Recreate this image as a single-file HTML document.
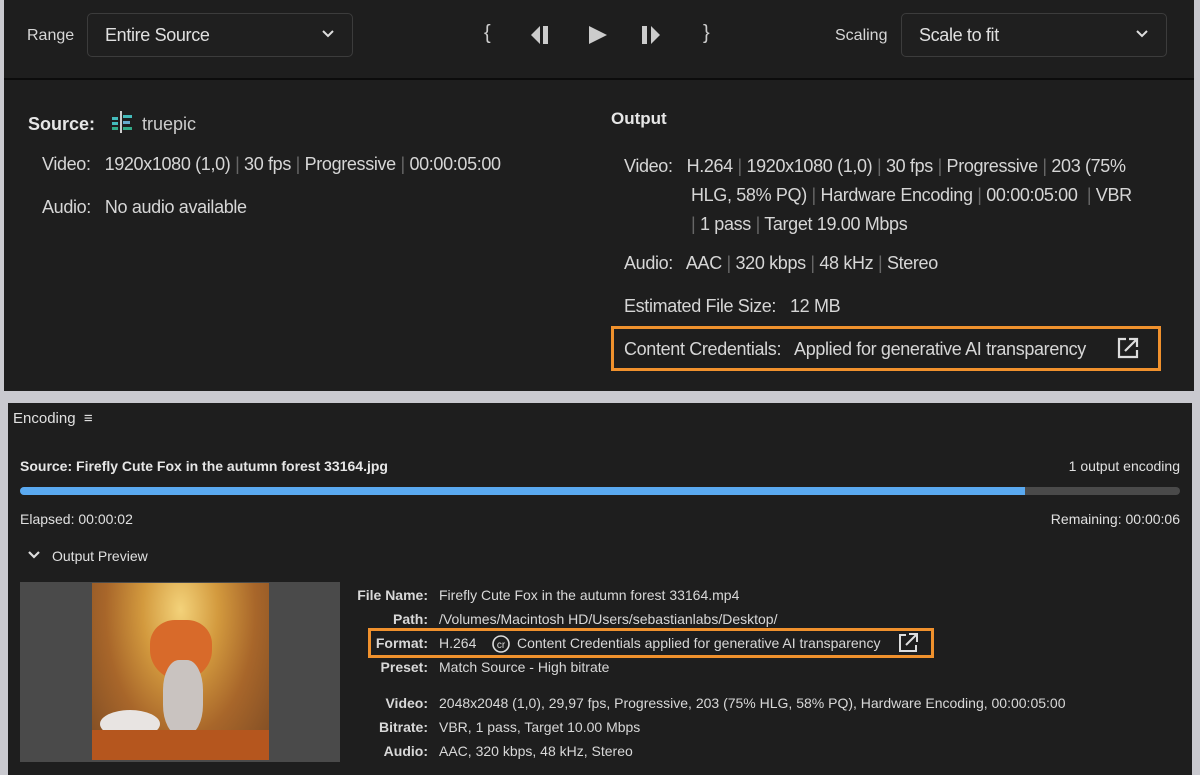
<!DOCTYPE html>
<html><head><meta charset="utf-8"><style>
*{margin:0;padding:0;box-sizing:border-box}
body{width:1200px;height:775px;background:#c9c9cf;position:relative;overflow:hidden;font-family:"Liberation Sans",sans-serif;color:#d6d6d6}
.p{position:absolute;background:#1e1e1e}
.t{position:absolute;white-space:nowrap}
.ls{letter-spacing:-0.35px}
.dd{position:absolute;border:1px solid #3c3c3c;border-radius:5px;background:#1f1f1f;height:44px}
.sep{color:#666}
.lbl{position:absolute;text-align:right;width:90px;white-space:nowrap;font-weight:bold;font-size:14px;color:#d8d8d8}
.val{position:absolute;white-space:nowrap;font-size:14px;color:#d8d8d8}
.or{position:absolute;border:3px solid #f0912d}
</style></head><body>
<div class="p" style="left:4px;top:0;width:1190px;height:391px"></div>
<div style="position:absolute;left:4px;top:78px;width:1190px;height:2px;background:#0c0c0c"></div>
<div class="p" style="left:8px;top:403px;width:1184px;height:372px"></div>

<div class="t" style="left:27px;top:27px;font-size:16px">Range</div>
<div class="dd" style="left:87px;top:13px;width:266px"></div>
<div class="t ls" style="left:105px;top:25px;font-size:18px;color:#e0e0e0">Entire Source</div>
<svg style="position:absolute;left:321px;top:29px" width="14" height="10"><path d="M2 2l5 5 5-5" stroke="#ddd" stroke-width="2" fill="none"/></svg>

<div class="t" style="left:484px;top:22px;font-size:20px;color:#ccc">{</div>
<svg style="position:absolute;left:529px;top:24px" width="26" height="22"><path d="M11 2L2 11l9 9z" fill="#ccc"/><rect x="14" y="2" width="5" height="18" fill="#ccc"/></svg>
<svg style="position:absolute;left:587px;top:24px" width="22" height="22"><path d="M2 2l18 9-18 9z" fill="#ccc"/></svg>
<svg style="position:absolute;left:640px;top:24px" width="26" height="22"><rect x="2" y="2" width="5" height="18" fill="#ccc"/><path d="M11 2l9 9-9 9z" fill="#ccc"/></svg>
<div class="t" style="left:703px;top:22px;font-size:20px;color:#ccc">}</div>

<div class="t" style="left:835px;top:27px;font-size:16px">Scaling</div>
<div class="dd" style="left:901px;top:13px;width:266px"></div>
<div class="t ls" style="left:919px;top:25px;font-size:18px;color:#e0e0e0">Scale to fit</div>
<svg style="position:absolute;left:1135px;top:29px" width="14" height="10"><path d="M2 2l5 5 5-5" stroke="#ddd" stroke-width="2" fill="none"/></svg>

<div class="t" style="left:28px;top:114px;font-size:18px;font-weight:bold;color:#e6e6e6">Source:</div>
<svg style="position:absolute;left:110px;top:110px" width="24" height="24"><rect x="2" y="7" width="6" height="3" fill="#4bb"/><rect x="2" y="12" width="6" height="3" fill="#4bb"/><rect x="2" y="17" width="6" height="3" fill="#3a8"/><rect x="10" y="1" width="2" height="22" fill="#ccc"/><rect x="13" y="5" width="9" height="3" fill="#4bb"/><rect x="13" y="11" width="7" height="3" fill="#6ac"/><rect x="13" y="17" width="9" height="3" fill="#3a8"/></svg>
<div class="t" style="left:142px;top:114px;font-size:18px;color:#ccc">truepic</div>
<div class="t ls" style="left:42px;top:154px;font-size:18px">Video:&nbsp;&nbsp; 1920x1080 (1,0) <span class="sep">|</span> 30 fps <span class="sep">|</span> Progressive <span class="sep">|</span> 00:00:05:00</div>
<div class="t ls" style="left:42px;top:197px;font-size:18px">Audio:&nbsp;&nbsp; No audio available</div>

<div class="t" style="left:611px;top:109px;font-size:17px;font-weight:bold;color:#e6e6e6">Output</div>
<div class="t ls" style="left:624px;top:152px;font-size:18px;line-height:29px">Video:&nbsp;&nbsp; H.264 <span class="sep">|</span> 1920x1080 (1,0) <span class="sep">|</span> 30 fps <span class="sep">|</span> Progressive <span class="sep">|</span> 203 (75%</div>
<div class="t ls" style="left:691px;top:181px;font-size:18px;line-height:29px">HLG, 58% PQ) <span class="sep">|</span> Hardware Encoding <span class="sep">|</span> 00:00:05:00 &nbsp;<span class="sep">|</span> VBR</div>
<div class="t ls" style="left:691px;top:210px;font-size:18px;line-height:29px"><span class="sep">|</span> 1 pass <span class="sep">|</span> Target 19.00 Mbps</div>
<div class="t ls" style="left:624px;top:253px;font-size:18px">Audio:&nbsp;&nbsp; AAC <span class="sep">|</span> 320 kbps <span class="sep">|</span> 48 kHz <span class="sep">|</span> Stereo</div>
<div class="t ls" style="left:624px;top:296px;font-size:18px">Estimated File Size:&nbsp;&nbsp; 12 MB</div>
<div class="or" style="left:611px;top:326px;width:550px;height:45px"></div>
<div class="t ls" style="left:624px;top:339px;font-size:18px">Content Credentials:&nbsp;&nbsp; Applied for generative AI transparency</div>
<svg style="position:absolute;left:1116px;top:336px" width="24" height="24"><path d="M10 3H3v18h18v-7" stroke="#ddd" stroke-width="2.2" fill="none"/><path d="M9 15L20 4M13 3h8v8" stroke="#ddd" stroke-width="2.2" fill="none"/></svg>

<div class="t" style="left:13px;top:410px;font-size:15px;color:#e0e0e0">Encoding &nbsp;≡</div>
<div class="t" style="left:20px;top:458px;font-size:14px;font-weight:bold;color:#e6e6e6">Source: Firefly Cute Fox in the autumn forest 33164.jpg</div>
<div class="t" style="right:20px;top:458px;font-size:14px;color:#e0e0e0">1 output encoding</div>
<div style="position:absolute;left:20px;top:487px;width:1160px;height:8px;border-radius:4px;background:#4a4a4a"></div>
<div style="position:absolute;left:20px;top:487px;width:1005px;height:8px;border-radius:4px 0 0 4px;background:#5aa9f0"></div>
<div class="t" style="left:20px;top:511px;font-size:14px;color:#e0e0e0">Elapsed: 00:00:02</div>
<div class="t" style="right:20px;top:511px;font-size:14px;color:#e0e0e0">Remaining: 00:00:06</div>
<svg style="position:absolute;left:28px;top:550px" width="12" height="10"><path d="M1 2l5 5 5-5" stroke="#ddd" stroke-width="2.2" fill="none"/></svg>
<div class="t" style="left:52px;top:548px;font-size:14px;color:#e0e0e0">Output Preview</div>

<div style="position:absolute;left:20px;top:582px;width:320px;height:180px;background:#4a4a4a"></div>
<div style="position:absolute;left:92px;top:583px;width:177px;height:177px;background:radial-gradient(ellipse at 50% 15%,#f3d27a 0%,#d39a3e 30%,#a8662a 60%,#7b4a24 100%)"></div>
<div style="position:absolute;left:150px;top:620px;width:62px;height:60px;border-radius:40% 40% 50% 50%;background:#d86a2a"></div>
<div style="position:absolute;left:163px;top:660px;width:40px;height:75px;border-radius:40%;background:#c9c3c0"></div>
<div style="position:absolute;left:100px;top:710px;width:60px;height:28px;border-radius:50%;background:#e8e4e2"></div>
<div style="position:absolute;left:92px;top:730px;width:177px;height:30px;background:#b5561e"></div>

<div class="lbl" style="left:338px;top:587px">File Name:</div><div class="val" style="left:439px;top:587px">Firefly Cute Fox in the autumn forest 33164.mp4</div>
<div class="lbl" style="left:338px;top:611px">Path:</div><div class="val" style="left:439px;top:611px">/Volumes/Macintosh HD/Users/sebastianlabs/Desktop/</div>
<div class="or" style="left:368px;top:628px;width:566px;height:30px"></div>
<div class="lbl" style="left:338px;top:635px">Format:</div><div class="val" style="left:439px;top:635px">H.264</div>
<svg style="position:absolute;left:491px;top:634px" width="20" height="20"><circle cx="10" cy="10" r="8" stroke="#ddd" stroke-width="1.6" fill="none"/><text x="10" y="14" font-size="10" fill="#ddd" text-anchor="middle" font-family="Liberation Sans">cr</text></svg>
<div class="val" style="left:517px;top:635px">Content Credentials applied for generative AI transparency</div>
<svg style="position:absolute;left:897px;top:632px" width="22" height="22"><path d="M9 3H3v16h16v-6" stroke="#ddd" stroke-width="2" fill="none"/><path d="M9 13L19 3M12 2h8v8" stroke="#ddd" stroke-width="2" fill="none"/></svg>
<div class="lbl" style="left:338px;top:659px">Preset:</div><div class="val" style="left:439px;top:659px">Match Source - High bitrate</div>
<div class="lbl" style="left:338px;top:695px">Video:</div><div class="val" style="left:439px;top:695px">2048x2048 (1,0), 29,97 fps, Progressive, 203 (75% HLG, 58% PQ), Hardware Encoding, 00:00:05:00</div>
<div class="lbl" style="left:338px;top:719px">Bitrate:</div><div class="val" style="left:439px;top:719px">VBR, 1 pass, Target 10.00 Mbps</div>
<div class="lbl" style="left:338px;top:743px">Audio:</div><div class="val" style="left:439px;top:743px">AAC, 320 kbps, 48 kHz, Stereo</div>
</body></html>
